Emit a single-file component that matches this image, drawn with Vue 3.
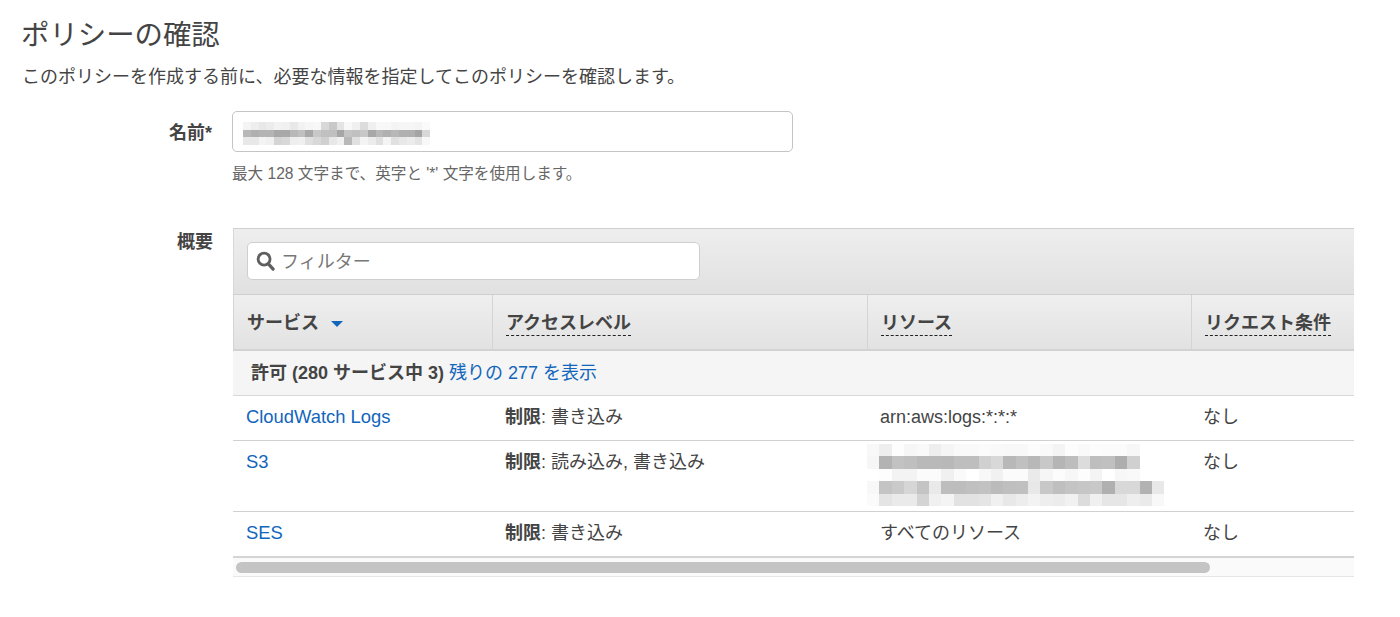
<script setup>
const hx = (s) => s.split(' ')
const nameMosaic = [
  'f4 ee e8 ec f2 f0 e8 f2 f6 f8 d8 c8 e4 f8 f0 dc f0 f8 f8 f4 f6 f6 f4 fa',
  'b8 b0 b4 b4 a8 a8 b8 c0 a8 c8 c0 c0 a6 c4 c0 c8 a8 b8 b0 b8 b0 b0 a4 d8',
  'e8 e8 f4 f0 d4 d8 ee f0 e0 d8 d0 e8 f0 b8 e0 f4 ec e0 f4 e0 e8 ec e4 f8',
].map(hx)
const resMosaic = [
  'f8 ee fd f6 f9 ee f5 f9 f9 fb f9 f8 f8 fc f9 f4 fc f9 fc fb fb f7 ff ff',
  'f6 b3 c2 bf b9 b9 b8 be be d0 d8 b8 c0 b8 c8 b5 bd dc be c0 ae d0 ff ff',
  'ff fd f3 f3 fb fb f0 fa ff f8 f1 fb fb ea f6 fc f7 fd f4 ff f7 f9 ff ff',
  'f8 c4 ca d6 c4 e9 bd bd c0 c2 bb bf c0 e8 c8 bf c4 c6 c8 b0 d8 d8 b2 e8',
  'fb e4 ea ea d4 f0 f4 e2 e2 e5 f0 e8 ed f3 ee ec f1 dc f0 e6 e6 ee ea f8',
].map(hx)
const rows = [
  { id: 'logs', service: 'CloudWatch Logs', access: '書き込み', resource: 'arn:aws:logs:*:*:*', cond: 'なし' },
  { id: 's3', service: 'S3', access: '読み込み, 書き込み', mosaic: resMosaic, cond: 'なし' },
  { id: 'ses', service: 'SES', access: '書き込み', resource: 'すべてのリソース', cond: 'なし' },
]
</script>

<template>
  <div class="page">
    <h1 class="title">ポリシーの確認</h1>
    <p class="lead">このポリシーを作成する前に、必要な情報を指定してこのポリシーを確認します。</p>

    <div class="form-row name-row">
      <div class="label name-label">名前*</div>
      <div class="field">
        <div class="name-input">
          <div class="mosaic small">
            <div v-for="(r, i) in nameMosaic" :key="i" class="m-row">
              <span v-for="(c, j) in r" :key="j" class="m-cell" :style="{ background: '#' + c + c + c }"></span>
            </div>
          </div>
        </div>
        <div class="hint">最大 128 文字まで、英字と '*' 文字を使用します。</div>
      </div>
    </div>

    <div class="form-row summary-row">
      <div class="label sum-label">概要</div>
      <div class="panel">
        <div class="toolbar">
          <div class="filter">
            <svg class="search" width="19" height="20" viewBox="0 0 20 21">
              <circle cx="8.5" cy="8.5" r="6.3" fill="none" stroke="#5f5f5f" stroke-width="3" />
              <path d="M13 13.5 L18 19" stroke="#5f5f5f" stroke-width="3.4" stroke-linecap="round" />
            </svg>
            <span class="ph">フィルター</span>
          </div>
        </div>
        <table class="grid">
          <colgroup>
            <col class="c1" /><col class="c2" /><col class="c3" /><col class="c4" />
          </colgroup>
          <thead>
            <tr>
              <th>サービス<span class="caret"></span></th>
              <th><span class="term">アクセスレベル</span></th>
              <th><span class="term">リソース</span></th>
              <th><span class="term">リクエスト条件</span></th>
            </tr>
          </thead>
          <tbody>
            <tr class="group">
              <td colspan="4"><b>許可 (280 サービス中 3)</b> <a class="link">残りの 277 を表示</a></td>
            </tr>
            <tr v-for="row in rows" :key="row.id" class="item" :class="'r-' + row.id">
              <td><a class="link latin">{{ row.service }}</a></td>
              <td><b>制限</b>: {{ row.access }}</td>
              <td class="res">
                <div v-if="row.mosaic" class="mosaic large">
                  <div v-for="(r, i) in row.mosaic" :key="i" class="m-row">
                    <span v-for="(c, j) in r" :key="j" class="m-cell" :style="{ background: '#' + c + c + c }"></span>
                  </div>
                </div>
                <template v-else>{{ row.resource }}</template>
              </td>
              <td class="cond">{{ row.cond }}</td>
            </tr>
          </tbody>
        </table>
        <div class="scroll"><div class="thumb"></div></div>
      </div>
    </div>
  </div>
</template>

<style scoped>
.page {
  box-sizing: border-box;
  width: 1400px;
  height: 617px;
  overflow: hidden;
  padding: 16px 46px 0 21px;
  font-family: "Liberation Sans", "Noto Sans CJK JP", sans-serif;
  color: #444;
  font-size: 18px;
}
.title {
  margin: 0;
  font-size: 28.4px;
  line-height: 38px;
  font-weight: 400;
  color: #444;
}
.lead {
  margin: 11px 0 0 1px;
  font-size: 18px;
  line-height: 24px;
  color: #444;
}
.form-row {
  display: grid;
  grid-template-columns: 192px 1fr;
  column-gap: 19px;
}
.name-row {
  margin-top: 22px;
}
.label {
  text-align: right;
  font-weight: 700;
  font-size: 18px;
  line-height: 24px;
  color: #444;
}
.name-label {
  padding-top: 10px;
  padding-right: 1px;
}
.name-input {
  box-sizing: border-box;
  width: 561px;
  height: 41px;
  border: 1px solid #c4c4c4;
  border-radius: 5px;
  padding: 10px 0 0 10px;
  background: #fff;
}
.hint {
  margin-top: 12px;
  font-size: 15.6px;
  line-height: 20px;
  color: #666;
}
.summary-row {
  margin-top: 44px;
}
.sum-label {
  padding-top: 2px;
}
.panel {
  width: 1121px;
  margin-left: 1px;
}
.toolbar {
  box-sizing: border-box;
  height: 67px;
  padding: 13px 0 0 13px;
  background: linear-gradient(#eeeeee, #e1e1e1);
  border-top: 1px solid #d0d0d0;
  border-left: 1px solid #d8d8d8;
  border-bottom: 1px solid #cfcfcf;
}
.filter {
  box-sizing: border-box;
  width: 453px;
  height: 38px;
  display: flex;
  align-items: center;
  background: #fff;
  border: 1px solid #cfcfcf;
  border-radius: 5px;
  padding-left: 8px;
}
.search {
  flex: none;
}
.ph {
  margin-left: 6px;
  margin-top: 2px;
  font-size: 18px;
  line-height: 24px;
  color: #777;
}
.grid {
  width: 1121px;
  table-layout: fixed;
  border-collapse: separate;
  border-spacing: 0;
}
.c1 { width: 259px; }
.c2 { width: 375px; }
.c3 { width: 324px; }
.c4 { width: 163px; }
th {
  box-sizing: border-box;
  height: 56px;
  padding: 2px 0 0 13px;
  text-align: left;
  font-size: 18px;
  line-height: 24px;
  font-weight: 700;
  color: #444;
  background: linear-gradient(#efefef, #e2e2e2);
  border-left: 1px solid #d4d4d4;
  border-bottom: 2px solid #d2d2d2;
  white-space: nowrap;
}
.term {
  display: inline-block;
  line-height: 24px;
  border-bottom: 1px dashed #222;
}
.caret {
  display: inline-block;
  margin-left: 12px;
  vertical-align: 2px;
  border-left: 6.5px solid transparent;
  border-right: 6.5px solid transparent;
  border-top: 6px solid #1166bb;
}
.group td {
  box-sizing: border-box;
  height: 45px;
  padding: 0 0 0 18px;
  background: #f5f5f5;
  border-bottom: 1px solid #d8d8d8;
  font-size: 18px;
  line-height: 24px;
}
.item td {
  box-sizing: border-box;
  height: 45px;
  padding: 0 0 2px 13px;
  vertical-align: middle;
  font-size: 18px;
  line-height: 24px;
  border-bottom: 1px solid #d0d0d0;
  white-space: nowrap;
}
.item td.cond {
  padding-left: 12px;
}
.r-s3 td {
  height: 71px;
  vertical-align: top;
  padding-top: 9px;
  padding-bottom: 0;
}
.r-s3 td.res {
  padding: 3px 0 0 0;
}
.r-ses td {
  height: 46px;
  padding-bottom: 3px;
  border-bottom: 2px solid #d4d4d4;
}
.link {
  color: #1166bb;
  text-decoration: none;
}
.latin {
  font-size: 18.4px;
}
b {
  font-weight: 700;
}
.mosaic {
  display: flex;
  flex-direction: column;
  filter: blur(0.4px);
}
.m-row {
  display: flex;
}
.m-cell {
  display: block;
  flex: none;
}
.small {
  width: 188px;
}
.small .m-cell {
  width: 7.8px;
  height: 7.5px;
}
.large .m-cell {
  width: 12.4px;
  height: 12.4px;
}
.scroll {
  box-sizing: border-box;
  height: 19px;
  padding: 4px 0 0 3px;
  background: #fafafa;
  border-bottom: 1px solid #e6e6e6;
}
.thumb {
  width: 974px;
  height: 11px;
  border-radius: 6px;
  background: #c4c4c4;
}
</style>
